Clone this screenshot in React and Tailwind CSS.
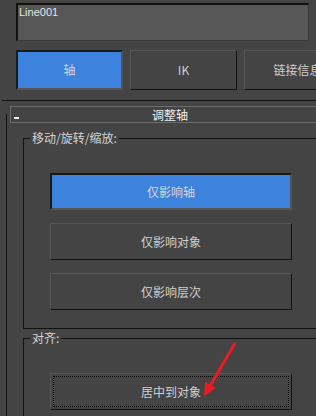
import React from "react";

const cjk = "font-['Noto_Sans_CJK_SC','Noto_Sans',sans-serif]";

function Btn({ children, active, focus, className = "" }) {
  if (active) {
    return (
      <div
        className={`flex items-center justify-center bg-[#3d82dc] border-t-2 border-l-2 border-r-2 border-b-2 border-t-[#1a1a1a] border-l-[#1a1a1a] border-r-[#555555] border-b-[#555555] text-[12px] text-[#d6d6d6] ${className}`}
      >
        {children}
      </div>
    );
  }
  return (
    <div
      className={`flex bg-[#444444] border border-t-[#565656] border-l-[#565656] border-r-[#111111] border-b-[#111111] text-[12px] text-[#cfcfcf] ${focus ? "p-[2px]" : ""} ${className}`}
    >
      <div
        className={`flex-1 flex items-center justify-center ${focus ? "border border-dotted border-black" : ""}`}
      >
        {children}
      </div>
    </div>
  );
}

function Group({ label, height, children, className = "" }) {
  return (
    <div
      className={`ml-[16px] w-[330px] border border-[#111111] flex flex-col shrink-0 ${className}`}
      style={{ height }}
    >
      <div className="-mt-[8px] ml-[6px] px-[2px] w-fit h-[14px] leading-[14px] bg-[#444444] text-[12px] text-[#d4d4d4]">
        {label}
      </div>
      {children}
    </div>
  );
}

export default function App() {
  return (
    <div
      className={`relative w-[316px] h-[416px] overflow-hidden bg-[#444444] flex flex-col ${cjk}`}
    >
      {/* name box */}
      <div className="ml-[16px] mt-[3px] w-[293px] h-[38px] shrink-0 bg-[#575757] border-t-2 border-l-2 border-r border-b border-t-[#111111] border-l-[#111111] border-r-[#3a3a3a] border-b-[#3a3a3a] pl-[1px] pt-[1px] text-[11px] leading-[13px] text-[#e6e6e6] font-['Liberation_Sans',sans-serif]">
        Line001
      </div>

      {/* tabs */}
      <div className="ml-[16px] mt-[9px] flex gap-[7px] h-[40px] shrink-0">
        <Btn active className="w-[107px] shrink-0">
          轴
        </Btn>
        <Btn className="w-[107px] shrink-0">IK</Btn>
        <Btn className="w-[107px] shrink-0">链接信息</Btn>
      </div>

      {/* divider */}
      <div className="ml-[2px] mt-[10px] h-px w-[314px] bg-[#111111] shrink-0" />

      {/* rollout */}
      <div className="pl-[6px] mt-[13px] flex-1 flex flex-col">
        <div className="flex-1 border-l border-[#111111] flex flex-col">
          <div className="relative -mt-[8px] ml-[3px] h-[17px] w-[320px] shrink-0 border border-[#6c6c6c] flex items-center justify-center text-[12px] text-[#f0f0f0]">
            <span className="absolute left-[3px] top-[10px] w-[5px] h-[2px] bg-[#f0f0f0]" />
            调整轴
          </div>

          <Group label="移动/旋转/缩放:" height="191px" className="mt-[15px]">
            <div className="ml-[26px] mt-[28px] flex flex-col gap-[13px]">
              <Btn active className="w-[242px] h-[37px]">
                仅影响轴
              </Btn>
              <Btn className="w-[242px] h-[37px]">仅影响对象</Btn>
              <Btn className="w-[242px] h-[37px]">仅影响层次</Btn>
            </div>
          </Group>

          <Group label="对齐:" height="120px" className="mt-[9px]">
            <div className="ml-[26px] mt-[28px] flex flex-col">
              <Btn focus className="w-[242px] h-[37px]">
                居中到对象
              </Btn>
            </div>
          </Group>
        </div>
      </div>

      {/* red annotation arrow */}
      <svg
        className="absolute left-0 top-0 pointer-events-none"
        width="316"
        height="416"
        viewBox="0 0 316 416"
      >
        <line
          x1="234.5"
          y1="344"
          x2="210"
          y2="386"
          stroke="#e81c24"
          strokeWidth="3"
          strokeLinecap="round"
        />
        <polygon points="204,396 205,381.5 216,388" fill="#e81c24" />
      </svg>
    </div>
  );
}
